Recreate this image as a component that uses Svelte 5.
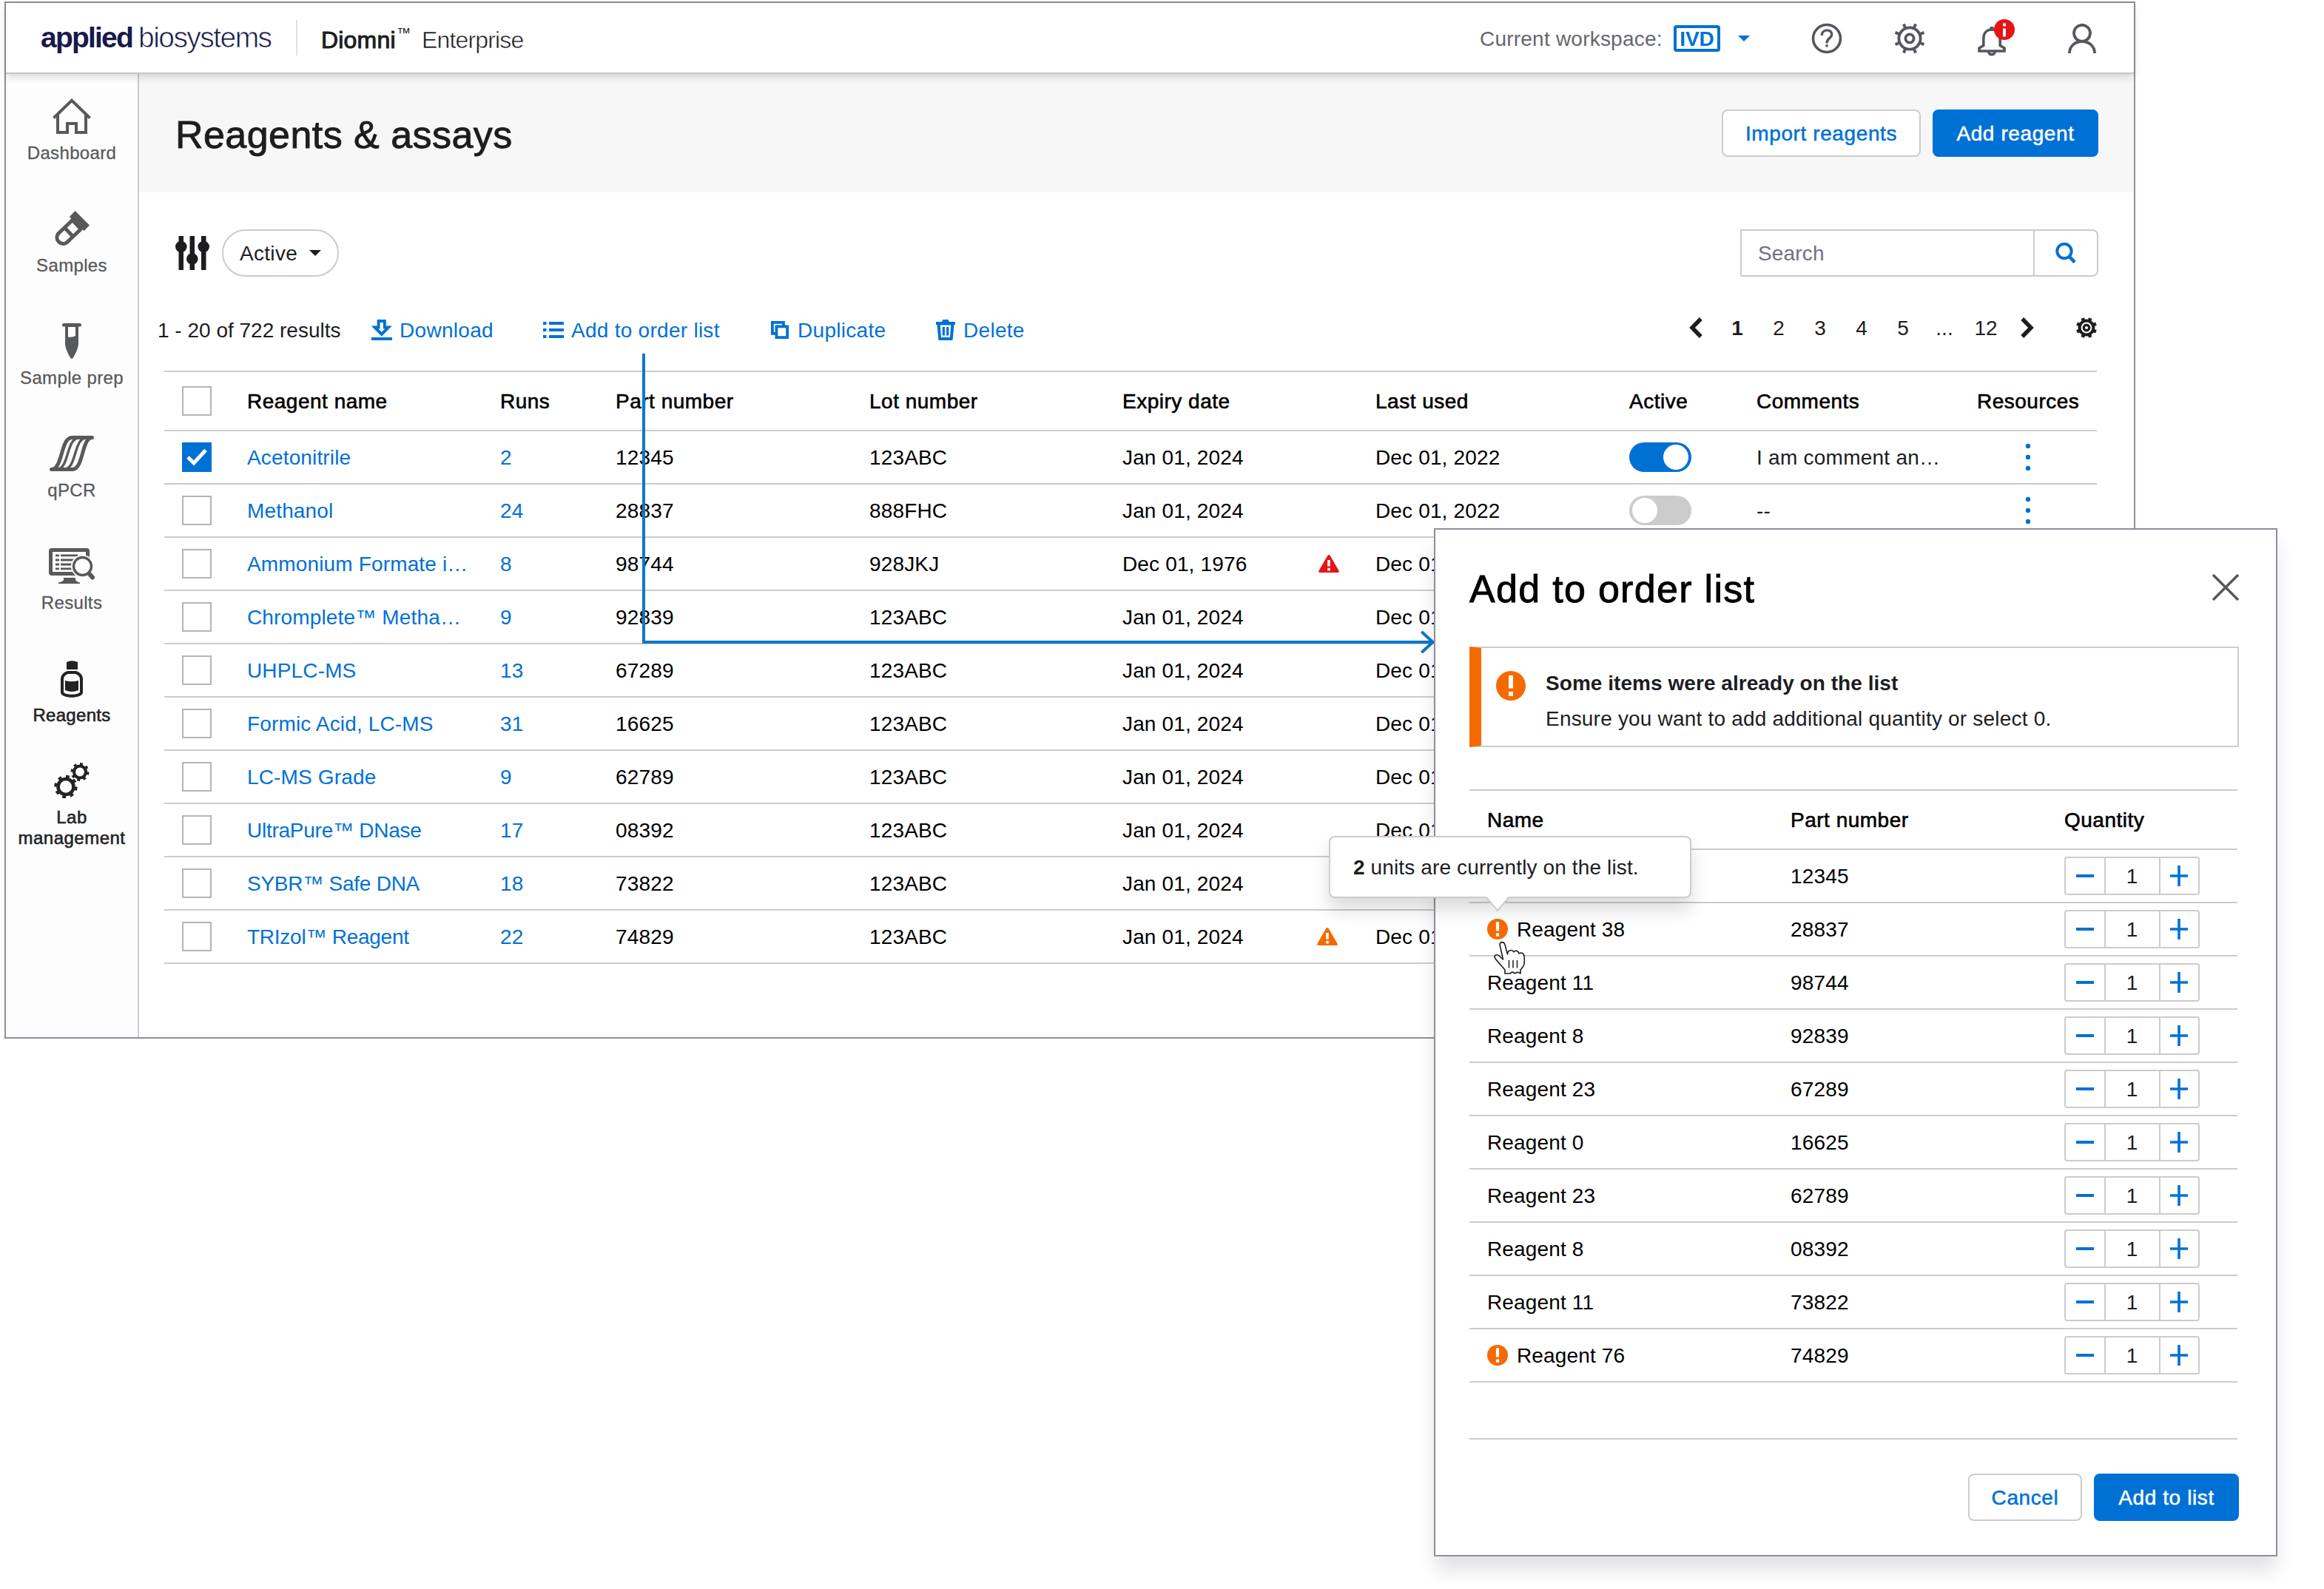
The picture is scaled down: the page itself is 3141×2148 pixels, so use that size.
<script>
  const nav = [
    { id: 'dashboard', label: 'Dashboard' },
    { id: 'samples', label: 'Samples' },
    { id: 'prep', label: 'Sample prep' },
    { id: 'qpcr', label: 'qPCR' },
    { id: 'results', label: 'Results' },
    { id: 'reagents', label: 'Reagents', dark: true },
    { id: 'lab', label: 'Lab management', dark: true }
  ];

  const pages = ['1', '2', '3', '4', '5', '...', '12'];

  const rows = [
    { name: 'Acetonitrile', runs: 2, part: '12345', lot: '123ABC', expiry: 'Jan 01, 2024', checked: true, active: true, comment: 'I am comment an…' },
    { name: 'Methanol', runs: 24, part: '28837', lot: '888FHC', expiry: 'Jan 01, 2024', comment: '--' },
    { name: 'Ammonium Formate i…', runs: 8, part: '98744', lot: '928JKJ', expiry: 'Dec 01, 1976', alert: 'red' },
    { name: 'Chromplete™ Metha…', runs: 9, part: '92839', lot: '123ABC', expiry: 'Jan 01, 2024' },
    { name: 'UHPLC-MS', runs: 13, part: '67289', lot: '123ABC', expiry: 'Jan 01, 2024' },
    { name: 'Formic Acid, LC-MS', runs: 31, part: '16625', lot: '123ABC', expiry: 'Jan 01, 2024' },
    { name: 'LC-MS Grade', runs: 9, part: '62789', lot: '123ABC', expiry: 'Jan 01, 2024' },
    { name: 'UltraPure™ DNase', runs: 17, part: '08392', lot: '123ABC', expiry: 'Jan 01, 2024', tight: true },
    { name: 'SYBR™ Safe DNA', runs: 18, part: '73822', lot: '123ABC', expiry: 'Jan 01, 2024', tight: true },
    { name: 'TRIzol™ Reagent', runs: 22, part: '74829', lot: '123ABC', expiry: 'Jan 01, 2024', alert: 'orange', tight: true }
  ];

  const items = [
    { name: '', part: '12345' },
    { name: 'Reagent 38', part: '28837', warn: true },
    { name: 'Reagent 11', part: '98744' },
    { name: 'Reagent 8', part: '92839' },
    { name: 'Reagent 23', part: '67289' },
    { name: 'Reagent 0', part: '16625' },
    { name: 'Reagent 23', part: '62789' },
    { name: 'Reagent 8', part: '08392' },
    { name: 'Reagent 11', part: '73822' },
    { name: 'Reagent 76', part: '74829', warn: true }
  ];
  const teeth = [22.5, 67.5, 112.5, 157.5, 202.5, 247.5, 292.5, 337.5];
</script>

{#snippet navIcon(id)}
  {#if id === 'dashboard'}
    <svg width="52" height="48" viewBox="0 0 52 48" fill="none" stroke="currentColor" stroke-width="4"><path d="M1.5 26.5 26 2.8l24.5 23.7" /><path d="M7 22v24h13V34h12v12h13V22" /></svg>
  {:else if id === 'samples'}
    <svg width="48" height="48" viewBox="0 0 48 48"><path d="M28.5 0 48 19.5 40.7 27 38.5 25.5 36 28 21.5 12.5 23.3 10.5 21 8z" fill="currentColor" /><path d="M25.5 12 5.6 31A8.4 8.4 0 0 0 17 43L36 25M14 22.5 25.5 34.5" fill="none" stroke="currentColor" stroke-width="5" /></svg>
  {:else if id === 'prep'}
    <svg width="26" height="48" viewBox="0 0 26 48" fill="currentColor"><rect width="26" height="4.6" rx="2.2" /><path fill-rule="evenodd" d="M4 3h18v24c0 6-4 15-7.5 20q-1.5 2-3 0C8 42 4 33 4 27zM8 5v13.5q5.500 1 10-1.500V5z" /></svg>
  {:else if id === 'qpcr'}
    <svg width="60" height="48" viewBox="0 0 60 48" fill="none" stroke="currentColor" stroke-linecap="round" stroke-linejoin="round"><path stroke-width="5" d="M2.500 45.500H31C46 45.500 43 3 57.500 2.500H30C15 3 18 45 2.500 45.500" /><path stroke-width="3.400" d="M11 45C26 44 23 4 39 3M21 45C36 44 33 4 49 3" /></svg>
  {:else if id === 'results'}
    <svg width="62" height="48" viewBox="0 0 62 48"><path fill="currentColor" d="M4 0h47q4 0 4 4v29q0 4-4 4H4q-4 0-4-4V4q0-4 4-4z" /><path fill="#fdfdfd" d="M5 5h45v27H5z" /><path stroke="currentColor" stroke-width="2.800" d="M9 9.800h5M9 16h5M9 22h5M9 27.800h5M16 9.800h23M16 16h18M16 22h15M16 27.800h16" /><circle cx="45.500" cy="24.500" r="15.500" fill="#fdfdfd" /><circle cx="45.500" cy="24.500" r="12" fill="#fdfdfd" stroke="currentColor" stroke-width="3.400" /><path stroke="currentColor" stroke-width="6" stroke-linecap="round" d="m55 35 4 4.500" /><path fill="currentColor" d="M20 40h16v3.500q3 2.500 6 3v1.500H13v-1.500q5-1 7-3z" /></svg>
  {:else if id === 'reagents'}
    <svg width="30" height="50" viewBox="0 0 30 50" fill="currentColor"><path d="M8 2q7-3.500 15 0v10H8z" /><path fill-rule="evenodd" d="M9 14h12c6 2.500 9 6 9 11v18c0 9-30 9-30 0V25c0-5 3-8.500 9-11zm1 4c-4 1.500-6 4-6 7v17c0 5 22 5 22 0V25c0-3-2-5.500-6-7z" /><path d="M6 27q9 2.500 18 0v13q-9 4-18 0z" /></svg>
  {:else}
    <svg width="48" height="48" viewBox="0 0 48 48" fill="none" stroke="currentColor"><circle cx="16" cy="32.500" r="10.500" stroke-width="4.600" /><circle cx="16" cy="32.500" r="14" stroke-width="3.400" pathLength="16" stroke-dasharray="0.900 1.100" /><circle cx="35" cy="12.500" r="8" stroke-width="4.200" /><circle cx="35" cy="12.500" r="11" stroke-width="3" pathLength="16" stroke-dasharray="0.900 1.100" /></svg>
  {/if}
{/snippet}

{#snippet triangle()}
  <svg width="28" height="24" viewBox="0 0 28 24"><path fill="currentColor" d="M12.300 1q1.700-2 3.400 0L27.500 21.500Q28.500 24 26 24H2Q-.500 24 .500 21.500z" /><path stroke="#fff" stroke-width="3.600" d="M14 7v8.500M14 17.800v3.600" /></svg>
{/snippet}

{#snippet bang(size)}
  <svg width={size} height={size} viewBox="0 0 40 40"><circle cx="20" cy="20" r="20" fill="#f56a00" /><path stroke="#fff" stroke-width="6" d="M20 6v17.500M20 28v6" /></svg>
{/snippet}

<div class="canvas">
  <div class="app">
    <header>
      <div class="logo"><b>applied</b><span>biosystems</span></div>
      <div class="product"><span class="diomni">Diomni</span><span class="tm">™</span><span class="ent">Enterprise</span></div>
      <div class="ws">Current workspace:</div>
      <div class="ivd">IVD</div>
      <svg class="caret" width="16" height="8" viewBox="0 0 16 8"><path fill="#0071d4" d="M0 0h16L8 8z" /></svg>
      <div class="tools">
        <svg width="42" height="42" viewBox="-21 -21 42 42" fill="none" stroke="currentColor"><circle r="18.500" stroke-width="3.600" /><path stroke-width="3.400" d="M-6.800-4C-6.800-13.200 6.800-13.200 6.800-5.500 6.800-.500 0-.500 0 6.500M0 8.200v3.400" /></svg>
        <svg width="42" height="42" viewBox="-21 -21 42 42" fill="none" stroke="currentColor"><circle r="14.600" stroke-width="3.800" /><circle r="5.600" stroke-width="3.800" />{#each teeth as t}<path stroke-width="4" transform="rotate({t})" d="M0-15v-6" />{/each}</svg>
        <svg class="bell" width="38" height="40" viewBox="0 0 38 40" fill="none" stroke="currentColor" stroke-width="3.600"><path d="M19 4C11 4 7.800 10 7.800 17v8.500L2 29v4h34v-4l-5.800-3.500V17C30.200 10 27 4 19 4z" /><path d="M14.800 34c0 5 8.400 5 8.400 0" /><path stroke-width="5" d="M19 0v3" /></svg>
        <svg width="38" height="40" viewBox="0 0 38 40" fill="none" stroke="currentColor" stroke-width="3.800"><ellipse cx="19" cy="12.800" rx="11" ry="11" /><path d="M1.900 40.500C2 18.500 36 18.500 36.100 40.500" /></svg>
        <span class="badge"><svg width="28" height="28" viewBox="0 0 28 28"><path stroke="#fff" stroke-width="4" d="M14 5.500v4M14 12.500v11" /></svg></span>
      </div>
    </header>

    <div class="body">
      <nav>
        {#each nav as n}
          <div class="item {n.id}" class:dark={n.dark}>
            <div class="ic">{@render navIcon(n.id)}</div>
            <div class="lb">{n.label}</div>
          </div>
        {/each}
      </nav>

      <main>
        <div class="title">
          <h1>Reagents &amp; assays</h1>
          <button class="btn import">Import reagents</button>
          <button class="btn primary add">Add reagent</button>
        </div>

        <div class="filters">
          <svg width="46" height="46" viewBox="0 0 46 46" fill="#1d1d1f"><path d="M4.500 0h6.500v46H4.500zM19.500 0H26v46h-6.500zM35 0h6.500v46H35z" /><circle cx="7.800" cy="14.500" r="7.800" /><circle cx="22.800" cy="31" r="7.800" /><circle cx="38.200" cy="14.500" r="7.800" /></svg>
          <div class="pill"><span>Active</span><svg width="16" height="8" viewBox="0 0 16 8"><path fill="#1d1d1f" d="M0 0h16L8 8z" /></svg></div>
          <div class="search">
            <div class="field">Search</div>
            <div class="go"><svg width="28" height="28" viewBox="0 0 28 28" fill="none" stroke="#0071d4"><circle cx="12" cy="11.500" r="9.700" stroke-width="4" /><path stroke-width="4.600" d="m18.500 18.500 7.500 8" /></svg></div>
          </div>
        </div>

        <div class="bar">
          <div class="acts">
            <span class="count">1 - 20 of 722 results</span>
            <a class="dl"><svg width="28" height="28" viewBox="0 0 28 28"><path fill="none" stroke="currentColor" stroke-width="4" d="M9.600 2h8.200v8.500H23L13.800 20 4.500 10.500h5.100z" /><path fill="currentColor" d="M0 24h28v4H0z" /></svg><span>Download</span></a>
            <a class="ol"><svg width="28" height="28" viewBox="0 0 28 28" stroke="currentColor" stroke-width="4"><path d="M0 5h4.500M8 5h20M0 14h4.500M8 14h20M0 23h4.500M8 23h20" /></svg><span>Add to order list</span></a>
            <a class="dup"><svg width="24" height="24" viewBox="0 0 24 24" fill="none" stroke="currentColor" stroke-width="3.800"><path d="M6 16.800H1.900V1.900H17V6" /><path d="M7.400 7.400h14.700v14.700H7.400z" /></svg><span>Duplicate</span></a>
            <a class="del"><svg width="26" height="28" viewBox="0 0 26 28"><path fill="currentColor" fill-rule="evenodd" d="M0 3h8l1.500-3h7L18 3h8v4h-1.500L22.500 28h-19L1.500 7H0zm5.800 4.500L7 24h12l1.200-16.500z" /><path stroke="currentColor" stroke-width="3.200" d="M10.300 10v11.500M15.700 10v11.500" /></svg><span>Delete</span></a>
          </div>
          <div class="pager">
            <span><svg width="18" height="28" viewBox="0 0 18 28" fill="none" stroke="#1d1d1f" stroke-width="5.500"><path d="M15.800 2 4 14l11.800 12" /></svg></span>
            {#each pages as p, i}<span class="pg" class:cur={i === 0}>{p}</span>{/each}
            <span><svg width="18" height="28" viewBox="0 0 18 28" fill="none" stroke="#1d1d1f" stroke-width="5.500"><path d="M2.200 2 14 14 2.200 26" /></svg></span>
            <svg class="cog" width="28" height="28" viewBox="-14 -14 28 28" fill="none" stroke="#1d1d1f"><circle r="9.400" stroke-width="4" /><circle r="3.700" stroke-width="3.400" />{#each teeth as t}<path stroke-width="4.600" transform="rotate({t})" d="M0-10v-4" />{/each}</svg>
          </div>
        </div>

        <div class="table">
          <div class="tr head">
            <span class="g"><i class="box"></i></span><span>Reagent name</span><span>Runs</span><span>Part number</span><span>Lot number</span><span>Expiry date</span><span></span><span>Last used</span><span>Active</span><span>Comments</span><span>Resources</span>
          </div>
          {#each rows as r}
            <div class="tr">
              <span class="g">{#if r.checked}<i class="box on"><svg width="28" height="24" viewBox="0 0 28 24" fill="none" stroke="#fff" stroke-width="5"><path d="m2 12 8 8L26 2.500" /></svg></i>{:else}<i class="box"></i>{/if}</span>
              <span class="link" class:tight={r.tight}>{r.name}</span>
              <span class="link">{r.runs}</span>
              <span>{r.part}</span>
              <span>{r.lot}</span>
              <span>{r.expiry}</span>
              <span class="g tri {r.alert}">{#if r.alert}{@render triangle()}{/if}</span>
              <span>Dec 01, 2022</span>
              <span class="g"><i class="toggle" class:on={r.active}></i></span>
              <span class="cm">{r.comment ?? '--'}</span>
              <span class="g dots"><svg width="8" height="38" viewBox="0 0 8 38" fill="#0071d4"><circle cx="4" cy="4" r="3.200" /><circle cx="4" cy="19" r="3.200" /><circle cx="4" cy="34" r="3.200" /></svg></span>
            </div>
          {/each}
        </div>
      </main>
    </div>
  </div>

  <svg class="wire" width="1080" height="412" viewBox="860 476 1080 412" fill="none" stroke="#0d78c9"><path stroke-width="4" d="M870 478v390h1066" /><path stroke-width="4" stroke-linecap="round" stroke-linejoin="round" d="m1922.500 855 14 13-14 13" /></svg>

  <section class="dialog">
    <div class="dh">
      <h2>Add to order list</h2>
      <svg width="36" height="36" viewBox="0 0 36 36" stroke="#56565e" stroke-width="3.400"><path d="m1 1 34 34M35 1 1 35" /></svg>
    </div>
    <div class="note">
      {@render bang(40)}
      <div><b>Some items were already on the list</b><p>Ensure you want to add additional quantity or select 0.</p></div>
    </div>
    <div class="list">
      <div class="lr head"><span>Name</span><span>Part number</span><span>Quantity</span></div>
      {#each items as it}
        <div class="lr">
          <span>{#if it.warn}{@render bang(28)}{/if}{it.name}</span>
          <span>{it.part}</span>
          <div class="step">
            <div class="sb"><svg width="24" height="28" viewBox="0 0 24 28"><path stroke="#0071d4" stroke-width="4" d="M0 14h24" /></svg></div>
            <div class="n">1</div>
            <div class="sb"><svg width="24" height="28" viewBox="0 0 24 28"><path stroke="#0071d4" stroke-width="3.600" d="M0 14h24M12 0v28" /></svg></div>
          </div>
        </div>
      {/each}
    </div>
    <div class="foot">
      <button class="btn cancel">Cancel</button>
      <button class="btn primary addl">Add to list</button>
    </div>
  </section>

  <div class="tip">
    <b>2</b>&nbsp;units are currently on the list.
    <svg width="32" height="22" viewBox="0 0 32 22"><path fill="#fff" d="M1 0h30L16 19z" /><path fill="none" stroke="#ccc" stroke-width="2" d="M1 1l15 18L31 1" /></svg>
  </div>

  <svg class="hand" width="44" height="46" viewBox="-1 -1 44 46"><path fill="#fff" stroke="#1d1d1f" stroke-width="1.600" stroke-linejoin="round" d="M8 4C8-.500 14-.500 15 4l3.500 13C18.500 11 25 10 27 14c2-3 6-2 7 2 3-2.500 7 0 7 4 1 10 0 13-5 18v5c-3-2.500-5-2.500-7.500 0-2.500-2.500-4.500-2.500-6.500 0h-7v-5C10 32 4 26 1.500 22-.500 18 5 16 8 20l4.500 4z" /><path stroke="#1d1d1f" stroke-width="1.500" d="M20.500 25v10.500M26 25v10.500M31.500 25v10.500" /></svg>
</div>

<style>
  :global(body) { background: #fff; }
  .canvas {
    position: relative; width: 3141px; height: 2148px; overflow: hidden; box-sizing: border-box; padding: 2px 0 0 6px;
    font-family: "Liberation Sans", Arial, sans-serif; font-size: 28px; letter-spacing: 0.15px; color: #1d1d1f; white-space: nowrap;
  }
  .canvas :global(*) { box-sizing: border-box; }
  svg { display: block; flex: none; }
  i { font-style: normal; }
  h1, h2, p { margin: 0; font-weight: 400; }

  .app { width: 2880px; height: 1402px; border: 2px solid #8f8e9f; background: #fff; display: flex; flex-direction: column; }
  header { position: relative; z-index: 1; height: 96px; border-bottom: 2px solid #c6c6c6; box-shadow: 0 4px 10px rgba(0, 0, 0, 0.14); background: #fff; display: flex; align-items: center; }
  .logo { width: 392px; padding-left: 47px; font-size: 39px; color: #171a4b; display: flex; }
  .logo b { letter-spacing: -1.8px; width: 132px; }
  .logo span { letter-spacing: -1.55px; -webkit-text-stroke: 0.7px #fff; }
  .product { position: relative; width: 1600px; height: 48px; border-left: 2px solid #e2e2e2; padding: 6px 0 0 32px; font-size: 32px; display: flex; align-items: center; }
  .diomni { -webkit-text-stroke: 1px #1d1d1f; letter-spacing: 0.2px; width: 102px; }
  .tm { font-size: 19px; width: 34px; align-self: flex-start; margin-top: 1px; }
  .ent { letter-spacing: -0.85px; -webkit-text-stroke: 0.5px #fff; }
  .ws { color: #66666f; width: 262px; letter-spacing: 0.22px; padding-top: 3px; }
  .ivd { width: 63px; height: 36px; border: 4px solid #0071d4; border-radius: 4px; color: #0071d4; font-weight: 700; letter-spacing: 0; display: flex; align-items: center; justify-content: center; margin-top: 2px; padding-top: 2px; }
  .caret { margin: 2px 0 0 24px; }
  .tools { position: relative; margin: 2px 0 0 83px; height: 48px; display: flex; align-items: center; color: #56565e; }
  .tools > svg:nth-child(2) { margin-left: 70px; }
  .tools .bell { margin: 8px 0 0 71px; }
  .tools > svg:nth-child(4) { margin-left: 84px; }
  .badge { position: absolute; left: 247px; top: -2px; width: 28px; height: 28px; border-radius: 50%; background: #e71316; }

  .body { flex: 1; display: flex; min-height: 0; }
  nav { width: 180px; border-right: 2px solid #ccc; background: #fdfdfd; padding-top: 33px; display: flex; flex-direction: column; gap: 64px; color: #58595b; font-size: 24px; letter-spacing: 0.35px; line-height: 28px; text-align: center; -webkit-text-stroke: 0.3px currentColor; }
  .ic { height: 48px; display: flex; justify-content: center; }
  .lb { margin-top: 12px; }
  .dark { color: #232326; -webkit-text-stroke: 0.6px currentColor; }
  .item.lab { margin-top: -14px; white-space: normal; letter-spacing: 0.5px; }
  .item.reagents { letter-spacing: 0.3px; }

  main { flex: 1; }
  .title { height: 160px; background: #f7f7f7; display: flex; align-items: center; padding: 0 48px 0 49px; }
  h1 { flex: 1; font-size: 52px; letter-spacing: 0.45px; -webkit-text-stroke: 0.9px #1d1d1f; padding-top: 4px; }
  .btn { height: 64px; border: 2px solid #ccc; border-radius: 8px; background: #fff; color: #0071d4; font: inherit; letter-spacing: 0.6px; padding: 2px 0 0; -webkit-text-stroke: 0.5px currentColor; }
  .primary { background: #0071d4; border-color: #0071d4; color: #fff; }
  .import { width: 269px; margin-right: 16px; }
  .add { width: 224px; }

  .filters { margin-top: 50px; height: 64px; display: flex; align-items: center; padding: 0 48px 0 49px; }
  .pill { width: 158px; height: 64px; border: 2px solid #ccc; border-radius: 32px; margin-left: 17px; padding-left: 22px; display: flex; align-items: center; gap: 16px; letter-spacing: 0.3px; }
  .pill span { padding-top: 2px; }
  .search { margin-left: auto; width: 484px; height: 64px; border: 2px solid #ccc; border-radius: 0 8px 8px 0; display: flex; }
  .field { width: 396px; border-right: 2px solid #ccc; padding: 2px 0 0 22px; color: #70707b; display: flex; align-items: center; }
  .go { flex: 1; display: flex; align-items: center; justify-content: center; }

  .bar { height: 127px; display: flex; justify-content: space-between; padding: 0 50px 0 24px; }
  .acts { display: grid; grid-template-columns: 290px 232px 308px 223px auto; align-items: center; padding-top: 17px; letter-spacing: 0; }
  .acts span { padding-top: 2px; }
  .acts .count { padding-left: 1px; }
  .acts a { display: flex; align-items: center; color: #0071d4; letter-spacing: 0.3px; }
  .dl { gap: 10px; }
  .ol { gap: 10px; }
  .acts a.ol { letter-spacing: 0.27px; }
  .dup { gap: 12px; }
  .del { gap: 11px; }
  .pager { display: flex; align-items: center; padding-top: 11px; }
  .pager span { width: 56px; display: flex; justify-content: center; letter-spacing: 0; }
  .pager .pg { padding-top: 2px; }
  .cur { font-weight: 700; }
  .cog { margin-left: 38px; }

  .table { margin-left: 34px; width: 2612px; border-top: 2px solid #ccc; color: #000; }
  .tr { display: grid; grid-template-columns: 88px 342px 156px 343px 342px 265px 77px 343px 172px 298px 162px; height: 72px; padding-left: 24px; border-bottom: 2px solid #ccc; align-items: center; }
  .tr > span { padding-top: 2px; }
  .tr > .g { padding-top: 0; }
  .tr.head { height: 80px; }
  .head { letter-spacing: 0.5px; -webkit-text-stroke: 0.6px #000; }
  .link { color: #0071d4; }
  .tight { letter-spacing: -0.25px; }
  .box { display: flex; align-items: center; justify-content: center; width: 40px; height: 40px; border: 2px solid #b4b4bb; background: #fff; }
  .box.on { background: #0071d4; border-color: #0071d4; }
  .tri.red { color: #e71316; }
  .tri.orange { color: #f56a00; margin-left: -2px; }
  .toggle { display: flex; align-items: center; width: 84px; height: 40px; border-radius: 20px; background: #ccc; padding: 0 4px; }
  .toggle::before { content: ''; width: 34px; height: 34px; border-radius: 50%; background: #fff; }
  .toggle.on { background: #0071d4; justify-content: flex-end; }
  .cm { color: #1d1d1f; letter-spacing: 0.25px; }
  .tr > .dots { padding-left: 65px; }

  .wire { position: absolute; left: 860px; top: 476px; }

  .dialog { position: absolute; left: 1938px; top: 714px; width: 1140px; height: 1390px; border: 2px solid #8f8e9f; background: #fff; box-shadow: 0 20px 24px -2px rgba(0, 0, 0, 0.12); padding: 0 50px 0 46px; color: #000; }
  .dh { height: 158px; display: flex; align-items: center; justify-content: space-between; }
  h2 { font-size: 52px; letter-spacing: 1.3px; -webkit-text-stroke: 0.9px #000; padding-top: 2px; }
  .dh svg { margin-top: -2px; }
  .note { width: 1040px; height: 136px; border: 2px solid #ccc; border-left: 16px solid #f56a00; padding: 18px 0 0 20px; display: flex; gap: 27px; color: #1d1d1f; line-height: 48px; letter-spacing: 0.2px; }
  .note svg { margin-top: 13px; }
  .note div { margin-top: 6px; }
  .note b { letter-spacing: 0.05px; }
  .list { margin-top: 57px; width: 1038px; border-top: 2px solid #ccc; }
  .lr { height: 72px; border-bottom: 2px solid #ccc; display: grid; grid-template-columns: 410px 370px 182px; padding-left: 24px; align-items: center; }
  .lr.head { height: 80px; }
  .lr span { display: flex; align-items: center; padding-top: 2px; }
  .lr span svg { margin: -2px 12px 0 0; }
  .step { height: 52px; width: 183px; border: 2px solid #ccc; border-radius: 4px; display: flex; }
  .sb { flex: 1; display: flex; align-items: center; justify-content: center; }
  .n { width: 76px; border: solid #ccc; border-width: 0 2px; display: flex; align-items: center; justify-content: center; padding-top: 2px; color: #1d1d1f; }
  .foot { width: 1038px; margin-top: 75px; height: 112px; border-top: 2px solid #ccc; padding-top: 46px; display: flex; justify-content: flex-end; gap: 16px; }
  .cancel { width: 154px; }
  .addl { width: 196px; margin-right: -2px; }

  .tip { position: absolute; left: 1796px; top: 1130px; width: 490px; height: 84px; border: 2px solid #ccc; border-radius: 8px; background: #fff; box-shadow: 0 16px 24px rgba(0, 0, 0, 0.14); display: flex; align-items: center; padding: 2px 0 0 31px; letter-spacing: 0.13px; }
  .tip svg { position: absolute; left: 210px; top: 80px; }
  .hand { position: absolute; left: 2018px; top: 1272px; }
</style>
